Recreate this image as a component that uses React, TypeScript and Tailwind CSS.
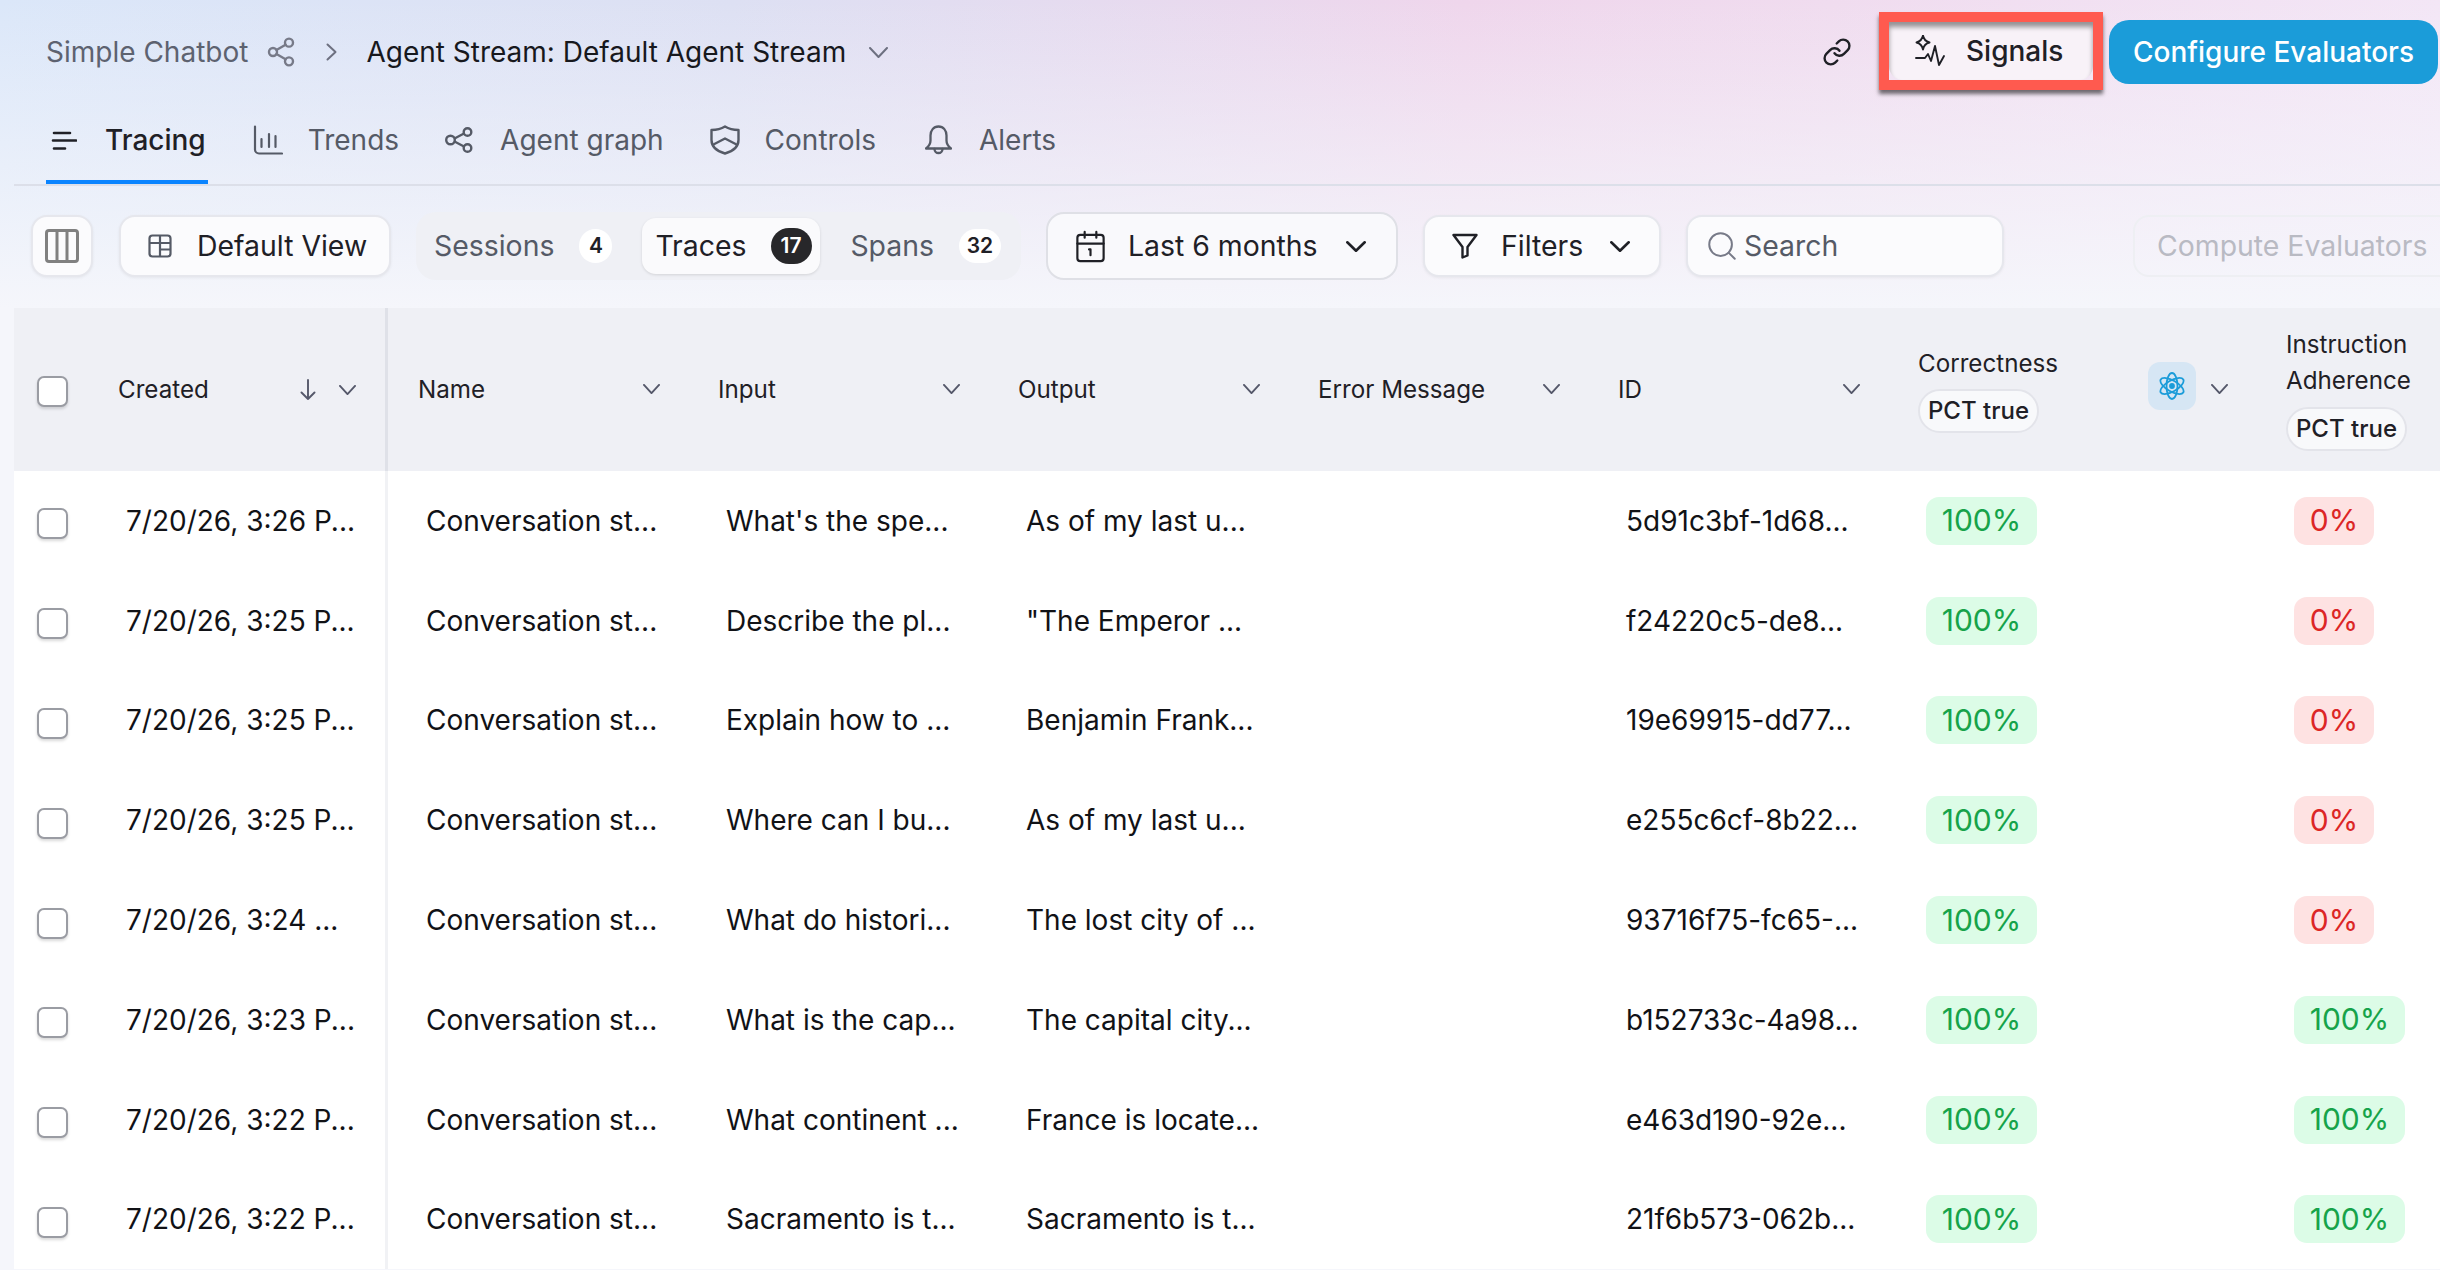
import React from "react";
import { Share2, Link, Calendar1, Search } from "lucide-react";

const Chev = ({ w, h, sw, color, className = "" }: { w: number; h: number; sw: number; color: string; className?: string }) => (
  <svg width={w} height={h} viewBox={`0 0 ${w} ${h}`} fill="none" stroke={color} strokeWidth={sw} strokeLinecap="round" strokeLinejoin="round" className={`shrink-0 ${className}`}>
    <path d={`M${sw / 2} ${sw / 2}L${w / 2} ${h - sw / 2}L${w - sw / 2} ${sw / 2}`} />
  </svg>
);
const TraceIcon = () => (
  <svg width="26" height="21" viewBox="0 0 26 21" fill="none" stroke="currentColor" strokeWidth="2.6" strokeLinecap="round">
    <path d="M3 3h16M2 10.500h23M3 18.500h11" />
  </svg>
);
const TrendIcon = () => (
  <svg width="30" height="30" viewBox="0 0 30 30" fill="none" stroke="currentColor" strokeWidth="2.2" strokeLinecap="round">
    <path d="M2 1.500v23a4 4 0 0 0 4 4h23M8.500 14v8M16 9v13M22.500 11v11" />
  </svg>
);
const GraphIcon = () => (
  <svg width="28" height="26" viewBox="0 0 28 26" fill="none" stroke="currentColor" strokeWidth="2.4">
    <circle cx="5.500" cy="13" r="4.300" />
    <circle cx="22.500" cy="5" r="3.800" />
    <circle cx="22.500" cy="21" r="3.800" />
    <path d="M9.500 11.500l9.500-5M9.500 14.500l9.500 5" />
  </svg>
);
const ShieldIcon = () => (
  <svg width="30" height="30" viewBox="0 0 30 30" fill="none" stroke="currentColor" strokeWidth="2.4" strokeLinejoin="round">
    <path d="M15 1.500C19 4 24 5 28.500 5v10c0 7-6.500 11.500-13.500 13.500C8 26.500 1.500 22 1.500 15V5C6 5 11 4 15 1.500z" />
    <path d="M2.500 20L15 13.500 27.500 20" />
  </svg>
);
const BellIcon = () => (
  <svg width="27" height="30" viewBox="0 0 27 30" fill="none" stroke="currentColor" strokeWidth="2.3" strokeLinecap="round" strokeLinejoin="round">
    <path d="M13.500 1.500c-5 0-8 4-8 9v5c0 3-2.500 6.500-4.500 8h25c-2-1.500-4.500-5-4.500-8v-5c0-5-3-9-8-9z" />
    <path d="M9.500 24a4 4 0 0 0 8 0" />
  </svg>
);
const ColumnsIcon = () => (
  <svg width="34" height="34" viewBox="0 0 34 34" fill="none" stroke="#808080" strokeWidth="3">
    <rect x="1.500" y="1.500" width="31" height="31" rx="2.500" />
    <path d="M12 2v30M22 2v30" />
  </svg>
);
const ViewIcon = () => (
  <svg width="24" height="24" viewBox="0 0 24 24" fill="none" stroke="#555a66" strokeWidth="2.200">
    <rect x="1.500" y="1.500" width="21" height="21" rx="3" />
    <path d="M1.500 9h21M12 1.500v21M12 15.500h10.500" />
  </svg>
);
const FunnelIcon = () => (
  <svg width="26" height="26" viewBox="0 0 26 26" fill="none" stroke="#1f2026" strokeWidth="2.4" strokeLinejoin="round">
    <path d="M1.500 2h23l-9 12v8.500l-5 2V14z" />
  </svg>
);
const SignalIcon = () => (
  <svg width="32" height="32" viewBox="0 0 32 32" fill="none" stroke="#1f2026" strokeWidth="1.900" strokeLinecap="round" strokeLinejoin="round">
    <path d="M8 0.500c.7 4 2.300 5.800 6.500 7-4.200 1-5.800 2.800-6.500 7-.8-4.200-2.400-6-6.500-7C5.600 6.300 7.200 4.500 8 0.500z" />
    <path d="M1 23h9l3-4 3 7 4-15 4 19 5-9" />
  </svg>
);
const AtomIcon = () => (
  <svg width="26" height="28" viewBox="0 0 26 28" fill="none" stroke="#1b9cd9" strokeWidth="1.800">
    <ellipse cx="13" cy="14" rx="5.500" ry="13" />
    <ellipse cx="13" cy="14" rx="5.500" ry="13" transform="rotate(60 13 14)" />
    <ellipse cx="13" cy="14" rx="5.500" ry="13" transform="rotate(-60 13 14)" />
    <circle cx="13" cy="14" r="2" fill="#1b9cd9" />
  </svg>
);

const tabs = [
  { label: "Trends", icon: <TrendIcon />, cls: "ml-[45px] gap-[25px]" },
  { label: "Agent graph", icon: <GraphIcon />, cls: "ml-[46px] gap-[27px]" },
  { label: "Controls", icon: <ShieldIcon />, cls: "ml-[46px] gap-[25px]" },
  { label: "Alerts", icon: <BellIcon />, cls: "ml-[49px] gap-[27px]" },
];

const rows = [
  ["7/20/26, 3:26 P...", "What's the spe...", "As of my last u...", "5d91c3bf-1d68...", false],
  ["7/20/26, 3:25 P...", "Describe the pl...", "\"The Emperor ...", "f24220c5-de8...", false],
  ["7/20/26, 3:25 P...", "Explain how to ...", "Benjamin Frank...", "19e69915-dd77...", false],
  ["7/20/26, 3:25 P...", "Where can I bu...", "As of my last u...", "e255c6cf-8b22...", false],
  ["7/20/26, 3:24 ...", "What do histori...", "The lost city of ...", "93716f75-fc65-...", false],
  ["7/20/26, 3:23 P...", "What is the cap...", "The capital city...", "b152733c-4a98...", true],
  ["7/20/26, 3:22 P...", "What continent ...", "France is locate...", "e463d190-92e...", true],
  ["7/20/26, 3:22 P...", "Sacramento is t...", "Sacramento is t...", "21f6b573-062b...", true],
] as const;

const Checkbox = ({ cls }: { cls: string }) => (
  <span className={`block h-[31px] w-[31px] shrink-0 rounded-[7px] border-2 border-[#9a9ca3] bg-white shadow-[0_2px_3px_rgba(0,0,0,0.15)] ${cls}`} />
);

const HeadChev = ({ className = "" }: { className?: string }) => <Chev w={17} h={10} sw={1.9} color="#55586a" className={className} />;

const HeadCell = ({ label }: { label: string }) => (
  <div className="flex items-center justify-between pl-[30px] pr-[28px]">
    <span className="translate-y-[1px]">{label}</span>
    <HeadChev />
  </div>
);

const Pill = () => (
  <span className="flex h-[44px] w-[121px] items-center justify-center rounded-full border-2 border-[#e3e4ea] bg-[#f8f9fb] text-[24px] font-medium">
    PCT true
  </span>
);

const Percent = ({ ok }: { ok: boolean }) =>
  ok ? (
    <span className="flex h-[48px] w-[111px] items-center justify-center rounded-[13px] bg-[#dcfce7] text-[30px] text-[#16a34a]">100%</span>
  ) : (
    <span className="flex h-[48px] w-[80px] items-center justify-center rounded-[13px] bg-[#fee2e2] text-[30px] text-[#dc2626]">0%</span>
  );

const boxed = "border-2 border-[#e6e7ed] bg-[#fbfbfd] shadow-[0_1px_3px_rgba(0,0,0,0.06)]";

export default function App() {
  return (
    <div className="h-[1270px] w-[2440px] overflow-hidden bg-[#f5f6fb] font-['Inter',sans-serif] text-[#1f2026]">
      <div className="h-[308px] bg-[linear-gradient(180deg,rgba(245,246,251,0)_0%,rgba(245,246,251,0.35)_35%,#f5f6fb_100%),linear-gradient(90deg,#dbe7f9_0%,#dde0f3_30%,#efd6ec_60%,#f0dcef_75%,#f3e6f6_100%)]">
        <div className="flex h-[104px] items-center pl-[46px] text-[28px]">
          <span className="text-[#5d6270]">Simple Chatbot</span>
          <Share2 size={32} strokeWidth={1.8} className="ml-[17px] shrink-0 text-[#777a88]" />
          <svg width="11" height="18" viewBox="0 0 11 18" fill="none" stroke="#6d7080" strokeWidth="2" strokeLinecap="round" strokeLinejoin="round" className="ml-[29px] shrink-0">
            <path d="M1.500 1.500L9.500 9 1.500 16.500" />
          </svg>
          <span className="ml-[29px] text-[#17181d]">Agent Stream: Default Agent Stream</span>
          <Chev w={19} h={11} sw={2} color="#6d7080" className="ml-[23px]" />
          <Link size={30} strokeWidth={1.9} className="ml-auto shrink-0 text-[#1f2026]" />
          <div className="relative ml-[27px] h-[78px] w-[224px] shrink-0 -translate-y-[1px] border-[10px] border-[#ff5a4f] shadow-[0_4px_4px_rgba(0,0,0,0.55)]">
            <div className="flex h-full items-center rounded-b-[14px] bg-[#f8f2f8] pl-[26px] shadow-[inset_0_5px_5px_rgba(0,0,0,0.4)]">
              <SignalIcon />
              <span className="ml-[19px] font-medium">Signals</span>
            </div>
          </div>
          <button className="ml-[6px] flex h-[64px] w-[329px] shrink-0 items-center justify-center rounded-[20px] bg-[#1b9cd9] font-medium text-white">
            Configure Evaluators
          </button>
          <span className="w-[2px] shrink-0" />
        </div>

        <div className="ml-[14px] flex h-[82px] items-start border-b-2 border-[#dcdfe9] pl-[32px] text-[28px] font-medium">
          <div className="flex h-[80px] items-center border-b-4 border-[#0a84ff] pb-[4px] pr-[2px] pl-[5px] text-[#1f2026]">
            <TraceIcon />
            <span className="ml-[28px]">Tracing</span>
          </div>
          {tabs.map((t) => (
            <div key={t.label} className={`flex h-[80px] items-center border-b-4 border-transparent pb-[4px] font-normal text-[#555a66] ${t.cls}`}>
              {t.icon}
              <span>{t.label}</span>
            </div>
          ))}
        </div>

        <div className="flex h-[122px] items-center pb-[2px] text-[28.4px]">
          <div className={`ml-[31px] flex h-[62px] w-[62px] shrink-0 items-center justify-center rounded-[16px] ${boxed}`}>
            <ColumnsIcon />
          </div>
          <div className={`ml-[26px] flex h-[62px] w-[272px] shrink-0 items-center rounded-[16px] pl-[27px] ${boxed}`}>
            <ViewIcon />
            <span className="ml-[25px]">Default View</span>
          </div>
          <div className="ml-[25px] flex h-[68px] w-[605px] shrink-0 items-center rounded-[20px] bg-[#eff0f5] pl-[18px] text-[#555a66]">
            <span>Sessions</span>
            <span className="ml-[25px] flex h-[34px] w-[33px] items-center justify-center rounded-full bg-white text-[21px] font-semibold text-[#1f2026]">4</span>
            <div className="ml-[30px] flex h-[56px] w-[178px] items-center rounded-[14px] bg-[#fafafc] pl-[13px] text-[#1f2026] shadow-[0_1px_3px_rgba(0,0,0,0.12)]">
              <span>Traces</span>
              <span className="ml-[24px] flex h-[36px] w-[41px] items-center justify-center rounded-full bg-[#27272a] text-[21px] font-semibold text-white">17</span>
            </div>
            <span className="ml-[30px]">Spans</span>
            <span className="ml-[25px] flex h-[34px] w-[42px] items-center justify-center rounded-full bg-white text-[21px] font-semibold text-[#1f2026]">32</span>
          </div>
          <div className="ml-[25px] flex h-[68px] w-[352px] shrink-0 items-center rounded-[18px] border-2 border-[#dfe0e6] bg-[#f9f9fc] pl-[25px]">
            <Calendar1 size={35} strokeWidth={1.5} className="shrink-0" />
            <span className="ml-[20px]">Last 6 months</span>
            <Chev w={20} h={11} sw={2.6} color="#1f2026" className="ml-[28px]" />
          </div>
          <div className={`ml-[25px] flex h-[62px] w-[238px] shrink-0 items-center rounded-[16px] pl-[27px] ${boxed}`}>
            <FunnelIcon />
            <span className="ml-[23px]">Filters</span>
            <Chev w={20} h={11} sw={2.6} color="#1f2026" className="ml-[27px]" />
          </div>
          <div className={`ml-[25px] flex h-[62px] w-[318px] shrink-0 items-center rounded-[16px] pl-[17px] text-[#555a66] ${boxed}`}>
            <Search size={34} strokeWidth={1.4} className="shrink-0 text-[#777a88]" />
            <span className="ml-[5px]">Search</span>
          </div>
          <div className="ml-[129px] flex h-[62px] w-[340px] shrink-0 items-center rounded-[16px] border-2 border-[#eeeff3] pl-[22px] text-[#b9bac3]">
            Compute Evaluators
          </div>
        </div>
      </div>

      <div className="ml-[14px] bg-white">
        <div className="grid h-[163px] grid-cols-[374px_300px_300px_300px_300px_300px_368px_1fr] items-center bg-[#eff0f5] text-[24.2px] text-[#1f2026]">
          <div className="flex h-full items-center border-r-[3px] border-[#dfe1e8] pl-[23px] pr-[29px]">
            <Checkbox cls="translate-y-[2px]" />
            <span className="ml-[50px] translate-y-[1px]">Created</span>
            <svg width="16" height="21" viewBox="0 0 16 21" fill="none" stroke="#55586a" strokeWidth="1.900" strokeLinecap="round" strokeLinejoin="round" className="ml-auto shrink-0">
              <path d="M8 1v19M1.500 13.500L8 20l6.500-6.500" />
            </svg>
            <HeadChev className="ml-[23px]" />
          </div>
          <HeadCell label="Name" />
          <HeadCell label="Input" />
          <HeadCell label="Output" />
          <HeadCell label="Error Message" />
          <HeadCell label="ID" />
          <div className="flex items-center pl-[30px]">
            <div className="flex w-[230px] flex-col items-start gap-[7px]">
              <span>Correctness</span>
              <Pill />
            </div>
            <span className="mb-[7px] flex h-[48px] w-[48px] shrink-0 items-center justify-center rounded-[12px] bg-[#d6e6f4]">
              <AtomIcon />
            </span>
            <HeadChev className="ml-[15px]" />
          </div>
          <div className="mb-[1px] flex flex-col items-start pl-[30px] leading-[36px]">
            <span>Instruction</span>
            <span>Adherence</span>
            <span className="mt-[8px]"><Pill /></span>
          </div>
        </div>

        {rows.map((r, i) => (
          <div key={i} className="grid h-[99.8px] grid-cols-[374px_300px_300px_300px_300px_300px_368px_1fr] items-center text-[28px] text-[#111216]">
            <div className="flex h-full items-center border-r-[3px] border-[#f1f2f5] pl-[23px]">
              <Checkbox cls="translate-y-[3px]" />
              <span className="ml-[58px] whitespace-nowrap">{r[0]}</span>
            </div>
            <div className="pl-[38px]">Conversation st...</div>
            <div className="pl-[38px]">{r[1]}</div>
            <div className="pl-[38px]">{r[2]}</div>
            <div />
            <div className="pl-[38px] whitespace-nowrap">{r[3]}</div>
            <div className="pl-[38px]"><Percent ok={true} /></div>
            <div className="pl-[38px]"><Percent ok={r[4]} /></div>
          </div>
        ))}
      </div>
    </div>
  );
}
